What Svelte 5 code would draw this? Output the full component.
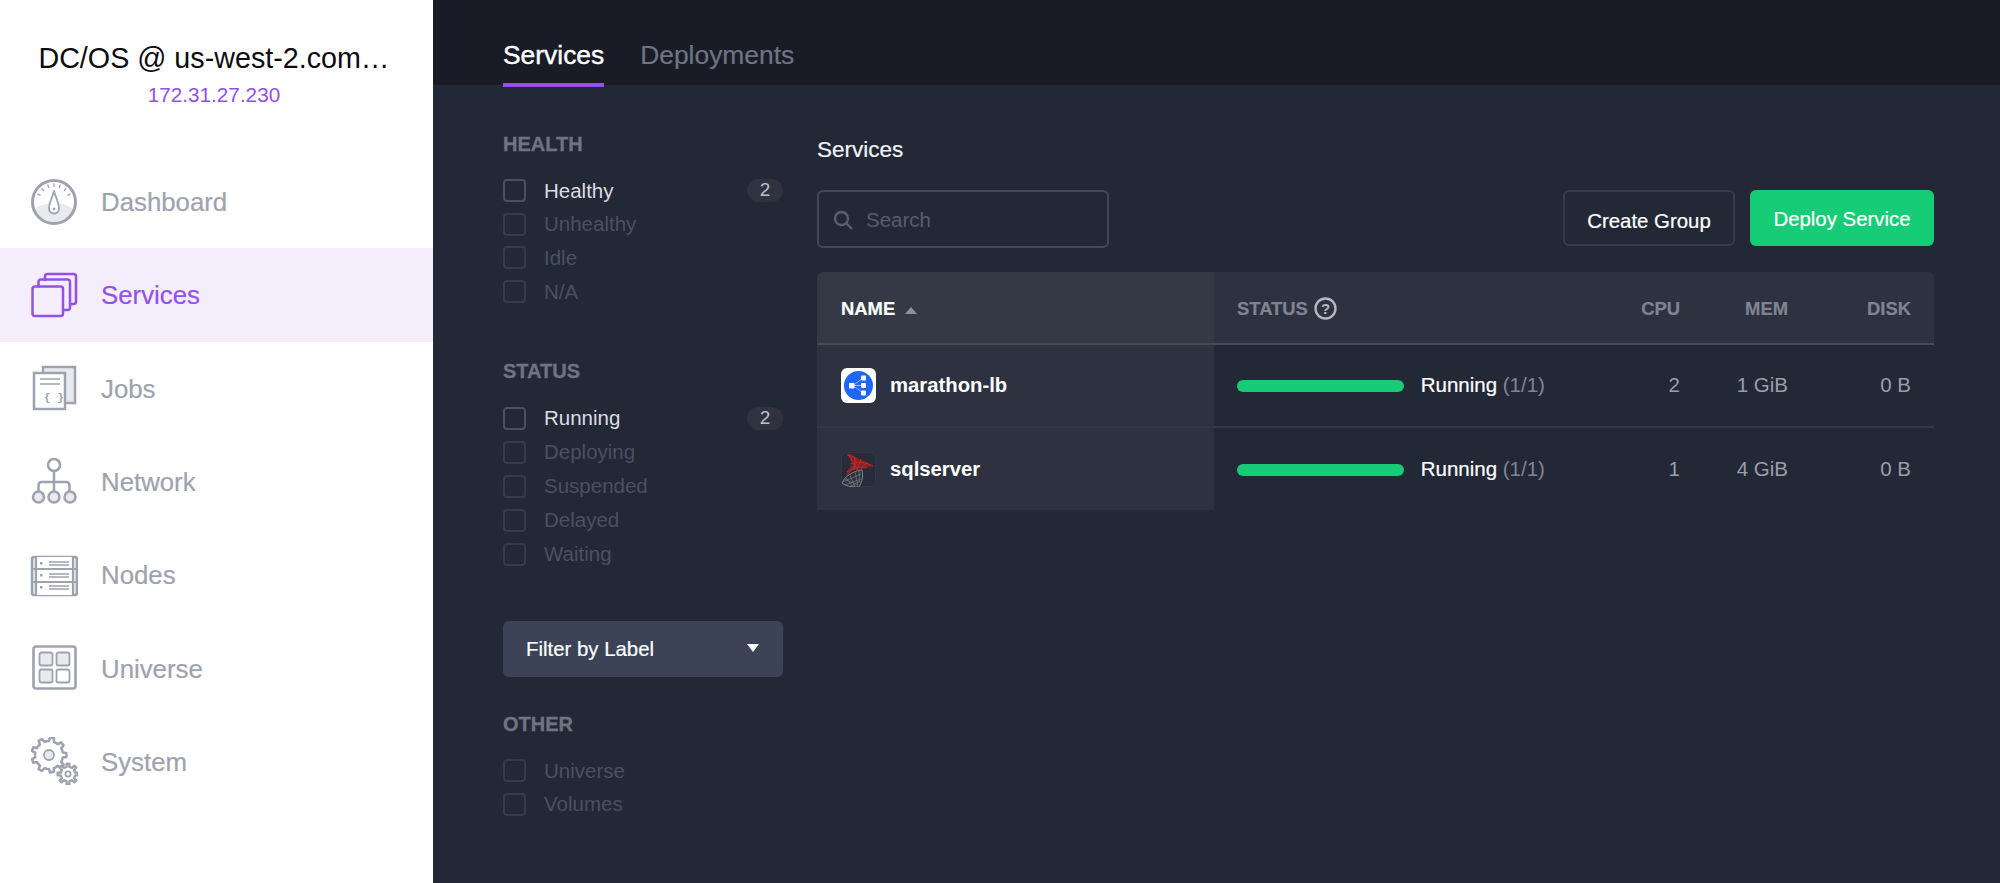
<script>
  const nav = [
    { id: "dashboard", label: "Dashboard" },
    { id: "services", label: "Services", active: true },
    { id: "jobs", label: "Jobs" },
    { id: "network", label: "Network" },
    { id: "nodes", label: "Nodes" },
    { id: "universe", label: "Universe" },
    { id: "system", label: "System" },
  ];

  const filters = [
    { title: "HEALTH", items: [{ label: "Healthy", count: 2 }, { label: "Unhealthy" }, { label: "Idle" }, { label: "N/A" }] },
    { title: "STATUS", items: [{ label: "Running", count: 2 }, { label: "Deploying" }, { label: "Suspended" }, { label: "Delayed" }, { label: "Waiting" }] },
  ];
  const other = ["Universe", "Volumes"];

  const services = [
    { name: "marathon-lb", cpu: "2", mem: "1 GiB", disk: "0 B", icon: "marathon" },
    { name: "sqlserver", cpu: "1", mem: "4 GiB", disk: "0 B", icon: "sql" },
  ];

  // gear outline for the System icon
  function gear(cx, cy, outer, inner, teeth) {
    const step = (Math.PI * 2) / teeth;
    let d = "";
    for (let i = 0; i < teeth; i++) {
      const a = i * step;
      const pts = [
        [inner, a - step * 0.5],
        [inner, a - step * 0.26],
        [outer, a - step * 0.16],
        [outer, a + step * 0.16],
        [inner, a + step * 0.26],
      ];
      for (const [r, t] of pts) {
        d += (d ? "L" : "M") + (cx + r * Math.cos(t)).toFixed(2) + " " + (cy + r * Math.sin(t)).toFixed(2);
      }
    }
    return d + "Z";
  }

  const ticks = [-64, -42, -20, 0, 20, 42, 64].map((deg) => {
    const t = (deg * Math.PI) / 180;
    return { x1: 24 + 15.5 * Math.sin(t), y1: 24 - 15.5 * Math.cos(t), x2: 24 + 18 * Math.sin(t), y2: 24 - 18 * Math.cos(t) };
  });
</script>

<div class="app">
  <aside class="sidebar">
    <header class="cluster">
      <div class="cluster-name">DC/OS @ us-west-2.com…</div>
      <div class="cluster-ip">172.31.27.230</div>
    </header>
    <nav class="nav">
      {#each nav as item}
        <div class="nav-item" class:active={item.active}>
          <svg class="nav-icon" viewBox="0 0 48 48" fill="none" stroke="currentColor" stroke-width="2.5" stroke-linejoin="round" stroke-linecap="round">
            {#if item.id === "dashboard"}
              <path d="M4.500 32C9 27 16 25 24 25s15 2 19.500 7A21.500 21.500 0 0 1 4.500 32Z" fill="#e8eaee" stroke="none" />
              <circle cx="24" cy="24" r="21.500" stroke-width="3" />
              {#each ticks as t}
                <line x1={t.x1} y1={t.y1} x2={t.x2} y2={t.y2} stroke-width="1.300" />
              {/each}
              <path d="M24 13c-1.500 6-5 12-5 17.500a5 5 0 0 0 10 0C29 25 25.500 19 24 13Z" fill="#fff" stroke-width="1.800" />
              <circle cx="24" cy="31" r="1.400" fill="currentColor" stroke="none" />
            {:else if item.id === "services"}
              <path d="M15 9V5.500A2.500 2.500 0 0 1 17.500 3h26A2.500 2.500 0 0 1 46 5.500v25a2.500 2.500 0 0 1-2.500 2.500H40" />
              <path d="M8.500 15.500v-5A2.500 2.500 0 0 1 11 8.500h26.500A2.500 2.500 0 0 1 40 11v25.500a2.500 2.500 0 0 1-2.500 2.500H33" />
              <rect x="2.500" y="15.500" width="30.500" height="29.500" rx="2.500" />
            {:else if item.id === "jobs"}
              <path d="M13 9V3h32v36H35" stroke-linejoin="miter" fill="#e8eaee" />
              <rect x="4" y="9" width="31" height="36" stroke-linejoin="miter" fill="#fff" />
              <path d="M10 15h20M10 20h20" stroke-width="1.500" stroke-linecap="butt" />
              <text x="24" y="37" class="braces">{"{ }"}</text>
            {:else if item.id === "network"}
              <circle cx="24" cy="7" r="6" />
              <path d="M24 13v20M8.500 33v-6a3 3 0 0 1 3-3h25a3 3 0 0 1 3 3v6" />
              <circle cx="8.500" cy="39" r="5.500" fill="#e8eaee" />
              <circle cx="24" cy="39" r="5.500" fill="#e8eaee" />
              <circle cx="40" cy="39" r="5.500" fill="#e8eaee" />
            {:else if item.id === "nodes"}
              <rect x="2" y="6" width="45" height="38" rx="2" fill="#e8eaee" />
              <rect x="6" y="6" width="37" height="38" fill="#fff" stroke="none" />
              <path d="M6 6v38M43 6v38M2 18h45M2 31h45" stroke-linecap="butt" stroke-width="2.200" />
              <path d="M19 11h20M19 14h20M19 23h20M19 26h20M19 35h20M19 38h20" stroke-width="1.300" stroke-linecap="butt" />
              <rect x="10" y="11" width="2.500" height="2.500" fill="currentColor" stroke="none" />
              <rect x="10" y="23" width="2.500" height="2.500" fill="currentColor" stroke="none" />
              <rect x="10" y="35" width="2.500" height="2.500" fill="currentColor" stroke="none" />
            {:else if item.id === "universe"}
              <rect x="3.500" y="2.500" width="42" height="42" rx="2.500" fill="#fff" stroke-width="2.600" />
              <rect x="9.500" y="8.500" width="13" height="13" rx="2" fill="#e8eaee" stroke-width="1.800" />
              <rect x="26.500" y="8.500" width="13" height="13" rx="2" fill="#e8eaee" stroke-width="1.800" />
              <rect x="9.500" y="25.500" width="13" height="13" rx="2" fill="#e8eaee" stroke-width="1.800" />
              <rect x="26.500" y="25.500" width="13" height="13" rx="2" fill="#fff" stroke-width="1.800" />
            {:else if item.id === "system"}
              <path d={gear(19, 18, 17.5, 14, 9)} fill="#fff" />
              <circle cx="19" cy="18" r="5" stroke-width="1.800" fill="#e8eaee" />
              <path d={gear(38, 37, 10.500, 7.200, 8)} fill="#fff" stroke-width="2.400" />
              <circle cx="38" cy="37" r="2.600" stroke-width="1.800" />
            {/if}
          </svg>
          <span class="nav-label">{item.label}</span>
        </div>
      {/each}
    </nav>
  </aside>

  <div class="content">
    <div class="tabs">
      <span class="tab current">Services</span>
      <span class="tab">Deployments</span>
    </div>

    <div class="body">
      <section class="filters">
        {#each filters as group}
          <div class="filter-group">
            <h3>{group.title}</h3>
            {#each group.items as f}
              <div class="check" class:on={f.count}>
                <span class="box"></span>
                <span class="check-label">{f.label}</span>
                {#if f.count}<span class="badge">{f.count}</span>{/if}
              </div>
            {/each}
          </div>
        {/each}
        <button class="label-filter"><span>Filter by Label</span><span class="caret"></span></button>
        <div class="filter-group other">
          <h3>OTHER</h3>
          {#each other as label}
            <div class="check"><span class="box"></span><span class="check-label">{label}</span></div>
          {/each}
        </div>
      </section>

      <section class="main">
        <h2>Services</h2>
        <div class="toolbar">
          <div class="search">
            <svg width="20" height="20" viewBox="0 0 20 20" fill="none" stroke="#596071" stroke-width="2.400"><circle cx="8.500" cy="8.500" r="6.500" /><path d="M13.500 13.500 19 19" /></svg>
            <span>Search</span>
          </div>
          <div class="actions">
            <button class="btn outline">Create Group</button>
            <button class="btn primary">Deploy Service</button>
          </div>
        </div>

        <table>
          <colgroup>
            <col style="width:397px" /><col style="width:381px" /><col style="width:108px" /><col style="width:108px" /><col style="width:123px" />
          </colgroup>
          <thead>
            <tr>
              <th class="name sorted">NAME<span class="sort"></span></th>
              <th class="status-h">
                <span class="status-title">STATUS
                  <svg width="23" height="23" viewBox="0 0 23 23" fill="none"><circle cx="11.500" cy="11.500" r="10" stroke="#b4b7c0" stroke-width="2.400" /><text x="11.500" y="17" class="qmark">?</text></svg>
                </span>
              </th>
              <th class="num">CPU</th>
              <th class="num">MEM</th>
              <th class="num">DISK</th>
            </tr>
          </thead>
          <tbody>
            {#each services as s}
              <tr>
                <td class="name">
                  <span class="svc">
                    {#if s.icon === "marathon"}
                      <svg class="svc-icon" viewBox="0 0 35 35">
                        <rect width="35" height="35" rx="6" fill="#fff" />
                        <circle cx="17.500" cy="17.500" r="14.500" fill="#1f66f4" />
                        <path d="M12 17.500 22 10M12 17.500h10M12 17.500 22 25" stroke="#8fb2fb" stroke-width="1" fill="none" />
                        <rect x="8" y="15" width="5.500" height="5.500" rx="1" fill="#fff" />
                        <rect x="20" y="7.500" width="5" height="5" rx="1" fill="#fff" />
                        <rect x="20" y="15" width="5" height="5" rx="1" fill="#fff" />
                        <rect x="20" y="22.500" width="5" height="5" rx="1" fill="#fff" />
                      </svg>
                    {:else}
                      <svg class="svc-icon" viewBox="0 0 35 35">
                        <rect x="0.500" y="0.500" width="34" height="34" rx="6" fill="#292c38" stroke="#343846" />
                        <path d="M7 2c4 0 6 1 7 3 5 2 13 5 18 9-6 2-12 2-17 3-4 1-8 3-10 6 1-5 5-8 6-11 0-3-3-5-4-10Z" fill="#7e2328" />
                        <path d="M6 3c6 1 8 3 9 6s-2 7-9 14M9 12c7-3 15-2 23 2M7 2l10 16M14 5l-1 13M20 7l-4 11M26 10l-6 7M6 20c7-5 14-5 20-4" stroke="#c92826" stroke-width="0.900" fill="none" />
                        <path d="M1 31c2-5 6-8 10-10 4-2 7-3 10-3 1 5 1 11-3 17-5 0-12 0-17-4Z" fill="#2f323d" stroke="#a3a6ad" stroke-width="0.700" />
                        <path d="M5 26l7 9M9 23l5 12M14 20l3 14M18 19l1 12M2 30l18-8M4 33l16-6M9 35l10-6M3 27l14 6" stroke="#8f929a" stroke-width="0.500" fill="none" />
                      </svg>
                    {/if}
                    {s.name}
                  </span>
                </td>
                <td class="status">
                  <span class="bar"></span>
                  <span class="running">Running</span> <span class="tasks">(1/1)</span>
                </td>
                <td class="num">{s.cpu}</td>
                <td class="num">{s.mem}</td>
                <td class="num">{s.disk}</td>
              </tr>
            {/each}
          </tbody>
        </table>
      </section>
    </div>
  </div>
</div>

<style>
  :global(body) {
    margin: 0;
    font-family: "Liberation Sans", Arial, sans-serif;
    background: #232836;
  }
  .app {
    display: flex;
    height: 883px;
    overflow: hidden;
  }
  .sidebar {
    width: 433px;
    flex: none;
    background: #fff;
    color: #9ea2ae;
  }
  .cluster {
    height: 155px;
    padding: 42px 5px 0 0;
    box-sizing: border-box;
    text-align: center;
  }
  .cluster-name {
    font-size: 28.700px;
    line-height: 32px;
    color: #0c0c10;
  }
  .cluster-ip {
    font-size: 20.700px;
    line-height: 24px;
    margin-top: 9px;
    color: #9351e5;
  }
  .nav-item {
    display: flex;
    align-items: center;
    gap: 23px;
    height: 93.300px;
    padding-left: 30px;
    font-size: 25.800px;
    -webkit-text-stroke: 0.2px currentColor;
  }
  .nav-item.active {
    background: #f4eefc;
    color: #9351e5;
  }
  .nav-icon {
    width: 48px;
    height: 48px;
    flex: none;
    -webkit-text-stroke: 0;
  }
  .nav-label {
    margin-top: 2px;
  }
  .braces {
    font-size: 11px;
    text-anchor: middle;
    stroke: none;
    fill: currentColor;
    font-family: "Liberation Mono", monospace;
    font-weight: bold;
  }
  .content {
    flex: 1;
    min-width: 0;
    color: #fff;
  }
  .tabs {
    display: flex;
    gap: 36px;
    height: 85px;
    padding-left: 70px;
    box-sizing: border-box;
    background: #191c27;
  }
  .tab {
    height: 87px;
    box-sizing: border-box;
    padding-top: 39px;
    line-height: 32px;
    font-size: 26.400px;
    color: #6f7484;
    -webkit-text-stroke: 0.2px currentColor;
  }
  .tab.current {
    color: #fff;
    border-bottom: 4px solid #9351e5;
    -webkit-text-stroke: 0.4px #fff;
  }
  .body {
    display: flex;
    gap: 34px;
    padding: 46px 66px 0 70px;
  }
  .filters {
    width: 280px;
    flex: none;
  }
  .filter-group {
    margin-bottom: 49.600px;
  }
  .filter-group:nth-child(2) {
    margin-bottom: 49.500px;
  }
  .filter-group:nth-child(2) .check {
    height: 34.100px;
  }
  .filter-group.other {
    margin: 34px 0 0;
  }
  h3 {
    margin: 0 0 17px;
    font-size: 20px;
    line-height: 26px;
    font-weight: bold;
    color: #6f7484;
    -webkit-text-stroke: 0.3px #6f7484;
  }
  .check {
    display: flex;
    align-items: center;
    height: 33.600px;
    font-size: 20.500px;
    color: #4b5061;
  }
  .check.on {
    color: #dcdde1;
  }
  .box {
    width: 23px;
    height: 23px;
    box-sizing: border-box;
    border: 2px solid #363b4b;
    border-radius: 4px;
    margin-right: 18px;
    flex: none;
  }
  .check.on .box {
    border-color: #4a4f62;
  }
  .check-label {
    flex: 1;
  }
  .badge {
    width: 36px;
    height: 23px;
    line-height: 22px;
    border-radius: 12px;
    background: #2f3340;
    text-align: center;
    font-size: 19px;
    color: #bfc1c8;
  }
  .label-filter {
    display: flex;
    align-items: center;
    justify-content: space-between;
    width: 100%;
    height: 56px;
    padding: 2px 24px 0 23px;
    border: none;
    border-radius: 6px;
    background: #3c4357;
    color: #fff;
    font: inherit;
    font-size: 20.400px;
    -webkit-text-stroke: 0.2px #fff;
  }
  .caret {
    width: 0;
    height: 0;
    margin-top: -3px;
    border-left: 6px solid transparent;
    border-right: 6px solid transparent;
    border-top: 8px solid #fff;
  }
  .main {
    flex: 1;
    min-width: 0;
  }
  h2 {
    margin: 0 0 26px;
    padding-top: 5px;
    font-size: 22.500px;
    line-height: 28px;
    font-weight: normal;
    color: #f4f4f6;
    -webkit-text-stroke: 0.2px #f4f4f6;
  }
  .toolbar {
    display: flex;
    justify-content: space-between;
    align-items: flex-start;
    margin-bottom: 24px;
  }
  .search {
    display: flex;
    align-items: center;
    gap: 13px;
    width: 292px;
    height: 58px;
    box-sizing: border-box;
    padding-left: 14px;
    padding-top: 2px;
    border: 2px solid #41465a;
    border-radius: 6px;
    font-size: 20.500px;
    color: #575c6d;
  }
  .actions {
    display: flex;
    gap: 15px;
  }
  .btn {
    height: 56px;
    border-radius: 6px;
    font: inherit;
    font-size: 20.400px;
    color: #fff;
    -webkit-text-stroke: 0.2px #fff;
  }
  .btn.outline {
    width: 172px;
    background: none;
    border: 2px solid #363b4b;
    padding: 7px 0 0;
  }
  .btn.primary {
    width: 184px;
    background: #16cc76;
    border: none;
    padding: 3px 0 0;
  }
  table {
    width: 1117px;
    border-collapse: separate;
    border-spacing: 0;
    table-layout: fixed;
    font-size: 20.500px;
  }
  th {
    height: 73px;
    padding: 2px 0 0;
    box-sizing: border-box;
    background: #2e3240;
    border-bottom: 2px solid #474b59;
    font-size: 18.400px;
    font-weight: bold;
    text-align: left;
    color: #7f8494;
    -webkit-text-stroke: 0.2px currentColor;
  }
  th:first-child {
    border-top-left-radius: 6px;
  }
  th:last-child {
    border-top-right-radius: 6px;
  }
  th.name {
    background: #353946;
    color: #fff;
  }
  td {
    height: 82.500px;
    padding: 0;
    box-sizing: border-box;
    border-bottom: 2px solid #343846;
  }
  tr:last-child td {
    border-bottom: none;
  }
  td.name {
    background: #2e3240;
    padding: 1px 0 0 24px;
    font-weight: bold;
    font-size: 20.300px;
  }
  th.name {
    padding-left: 24px;
  }
  .svc {
    display: flex;
    align-items: center;
    gap: 14px;
  }
  .svc-icon {
    width: 35px;
    height: 35px;
    flex: none;
  }
  .sort {
    display: inline-block;
    width: 0;
    height: 0;
    margin-left: 10px;
    vertical-align: 1px;
    border-left: 6px solid transparent;
    border-right: 6px solid transparent;
    border-bottom: 7px solid #8d909c;
  }
  .status-h {
    padding-left: 23px;
  }
  .status-title {
    display: flex;
    align-items: center;
    gap: 6px;
  }
  td.status {
    padding-left: 23px;
    white-space: nowrap;
    color: #fff;
    -webkit-text-stroke: 0.2px #fff;
  }
  .bar {
    display: inline-block;
    width: 167px;
    height: 12px;
    margin-right: 11px;
    border-radius: 6px;
    background: #16cc76;
    vertical-align: 0;
  }
  .tasks {
    color: #7f8494;
    -webkit-text-stroke: 0;
  }
  .num {
    padding-right: 23px;
    text-align: right;
    color: #9a9eaa;
  }
  th.num {
    color: #7f8494;
  }
  .qmark {
    font-size: 15px;
    font-weight: bold;
    text-anchor: middle;
    fill: #b4b7c0;
    -webkit-text-stroke: 0;
  }
</style>
